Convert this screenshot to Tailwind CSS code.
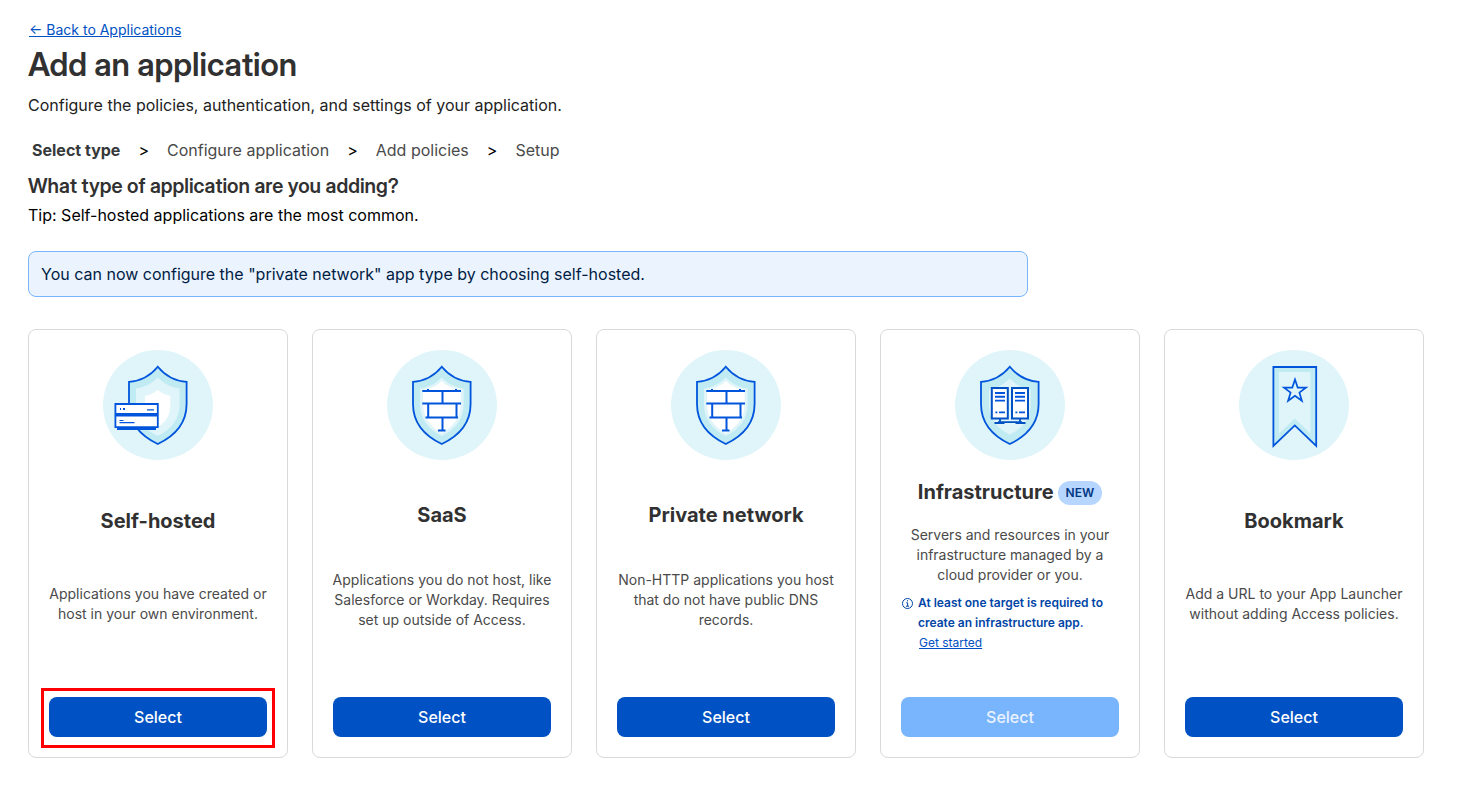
<!DOCTYPE html>
<html lang="en">
<head>
    <meta charset="UTF-8">
    <meta name="viewport" content="width=device-width, initial-scale=1.0">
    <title>Add an application</title>
    <script src="https://cdn.jsdelivr.net/npm/@tailwindcss/browser@4"></script>
</head>
<body class="bg-white font-['Inter',sans-serif] text-base text-[#313131]">

    <main class="pl-7 pr-14 pt-5 pb-11">
        <header>
            <a href="#" class="block w-fit ml-px text-sm leading-5 text-[#0051c3] underline">← Back to Applications</a>
            <h1 class="mt-1 font-['Inter_Display','Inter',sans-serif] text-[32px] leading-[42px] font-semibold">Add an application</h1>
            <p class="mt-[7px] leading-6 text-[#222222]">Configure the policies, authentication, and settings of your application.</p>
        </header>

        <nav aria-label="Steps" class="mt-[21px] ml-1">
            <ol class="flex items-center gap-[18px] leading-6 text-[#4a4a4a]">
                <li class="font-bold text-[#36393a]" aria-current="step">Select type</li>
                <li class="text-black" aria-hidden="true">&gt;</li>
                <li>Configure application</li>
                <li class="text-black" aria-hidden="true">&gt;</li>
                <li>Add policies</li>
                <li class="text-black" aria-hidden="true">&gt;</li>
                <li>Setup</li>
            </ol>
        </nav>

        <h2 class="mt-2 font-['Inter_Display','Inter',sans-serif] text-xl leading-8 font-semibold">What type of application are you adding?</h2>
        <p class="mt-px leading-6 text-black">Tip: Self-hosted applications are the most common.</p>

        <div class="mt-6 max-w-[1000px] rounded-lg border border-[#79b5fc] bg-[#ebf3ff] px-3 py-[10px] leading-6 text-[#001c43]">
            You can now configure the "private network" app type by choosing self-hosted.
        </div>

        <div class="mt-8 grid grid-cols-5 gap-6 text-center">

            <!-- Self-hosted -->
            <section class="flex flex-col justify-between gap-[18px] rounded-lg border border-[#d9d9d9] p-5">
                <svg class="mx-auto size-[110px]" viewBox="0 0 110 110" fill="none" aria-hidden="true">
                    <circle cx="55" cy="55" r="55" fill="#e0f5fa"/>
                    <path d="M54.8 16.7C48 25 38 31 26 31.8V54C26 73 38 86 54.8 94C71.6 86 83.6 73 83.6 54V31.8C71.6 31 61.6 25 54.8 16.7Z" fill="#c0ebf3" stroke="#0055dc" stroke-width="1.8"/>
                    <path d="M54.8 27.6C49 33.5 42 37.5 33 38.5V54C33 69 41 79 54.8 86C68.5 79 76.6 69 76.6 54V38.5C67.5 37.5 60.5 33.5 54.8 27.6Z" fill="#e0f5fa"/>
                    <path d="M54.8 40C51 43 47 45 42 45.7V55C42 65 46 72 54.8 77C63 72 67.3 65 67.3 55V45.7C62.5 45 58.5 43 54.8 40Z" fill="#fff"/>
                    <path d="M12.4 54H54.8V64H12.4ZM12.4 65.7H54.8V77.2H12.4Z" fill="#fff" stroke="#0055dc" stroke-width="1.8"/>
                    <path d="M14 78.7H53" stroke="#0055dc" stroke-width="2.4"/>
                    <path d="M17 59H18M20 59H22" stroke="#0055dc" stroke-width="1.8"/>
                    <path d="M44 59.8H51M16.5 70.5H20.5M16.5 72.6H31.5" stroke="#0055dc" stroke-width="1.2"/>
                </svg>
                <h3 class="text-xl leading-[29px] font-bold">Self-hosted</h3>
                <p class="-mx-1 text-sm leading-5 text-[#4a4a4a]">Applications you have created or host in your own environment.</p>
                <div class="pt-[26px]">
                    <div class="relative">
                        <button type="button" class="block h-10 w-full rounded-lg bg-[#0051c3] font-medium text-white">Select</button>
                        <span class="pointer-events-none absolute -inset-x-2 -top-[9px] -bottom-[11px] border-3 border-[#ff0000]"></span>
                    </div>
                </div>
            </section>

            <!-- SaaS -->
            <section class="flex flex-col justify-between gap-[18px] rounded-lg border border-[#d9d9d9] p-5">
                <svg class="mx-auto size-[110px]" viewBox="0 0 110 110" fill="none" aria-hidden="true">
                    <circle cx="55" cy="55" r="55" fill="#e0f5fa"/>
                    <path d="M54.8 16.7C48 25 38 31 26 31.8V54C26 73 38 86 54.8 94C71.6 86 83.6 73 83.6 54V31.8C71.6 31 61.6 25 54.8 16.7Z" fill="#c0ebf3" stroke="#0055dc" stroke-width="1.8"/>
                    <path d="M54.8 27.6C49 33.5 42 37.5 33 38.5V54C33 69 41 79 54.8 86C68.5 79 76.6 69 76.6 54V38.5C67.5 37.5 60.5 33.5 54.8 27.6Z" fill="#e0f5fa"/>
                    <path d="M54.8 31C49.5 36 43 39 36 40V54C36 67 43 77 54.8 83C66.5 77 73.6 67 73.6 54V40C66.5 39 60 36 54.8 31Z" fill="#fff"/>
                    <path d="M35.3 41H74M35.3 53.5H74M38.5 67.5H71M51 80.5H58.5M41 39V41M69 39V41M55.5 41V53.5M41.2 53.5V67.5M69.5 53.5V67.5M55.5 67.5V80.5" stroke="#0055dc" stroke-width="2"/>
                </svg>
                <h3 class="text-xl leading-[29px] font-bold">SaaS</h3>
                <p class="-mx-1 text-sm leading-5 text-[#4a4a4a]">Applications you do not host, like Salesforce or Workday. Requires set up outside of Access.</p>
                <div class="pt-[26px]">
                    <button type="button" class="block h-10 w-full rounded-lg bg-[#0051c3] font-medium text-white">Select</button>
                </div>
            </section>

            <!-- Private network -->
            <section class="flex flex-col justify-between gap-[18px] rounded-lg border border-[#d9d9d9] p-5">
                <svg class="mx-auto size-[110px]" viewBox="0 0 110 110" fill="none" aria-hidden="true">
                    <circle cx="55" cy="55" r="55" fill="#e0f5fa"/>
                    <path d="M54.8 16.7C48 25 38 31 26 31.8V54C26 73 38 86 54.8 94C71.6 86 83.6 73 83.6 54V31.8C71.6 31 61.6 25 54.8 16.7Z" fill="#c0ebf3" stroke="#0055dc" stroke-width="1.8"/>
                    <path d="M54.8 27.6C49 33.5 42 37.5 33 38.5V54C33 69 41 79 54.8 86C68.5 79 76.6 69 76.6 54V38.5C67.5 37.5 60.5 33.5 54.8 27.6Z" fill="#e0f5fa"/>
                    <path d="M54.8 31C49.5 36 43 39 36 40V54C36 67 43 77 54.8 83C66.5 77 73.6 67 73.6 54V40C66.5 39 60 36 54.8 31Z" fill="#fff"/>
                    <path d="M35.3 41H74M35.3 53.5H74M38.5 67.5H71M51 80.5H58.5M41 39V41M69 39V41M55.5 41V53.5M41.2 53.5V67.5M69.5 53.5V67.5M55.5 67.5V80.5" stroke="#0055dc" stroke-width="2"/>
                </svg>
                <h3 class="text-xl leading-[29px] font-bold">Private network</h3>
                <p class="-mx-1 text-sm leading-5 text-[#4a4a4a]">Non-HTTP applications you host that do not have public DNS records.</p>
                <div class="pt-[26px]">
                    <button type="button" class="block h-10 w-full rounded-lg bg-[#0051c3] font-medium text-white">Select</button>
                </div>
            </section>

            <!-- Infrastructure -->
            <section class="flex flex-col justify-between gap-[18px] rounded-lg border border-[#d9d9d9] p-5">
                <svg class="mx-auto size-[110px]" viewBox="0 0 110 110" fill="none" aria-hidden="true">
                    <circle cx="55" cy="55" r="55" fill="#e0f5fa"/>
                    <path d="M54.8 16.7C48 25 38 31 26 31.8V54C26 73 38 86 54.8 94C71.6 86 83.6 73 83.6 54V31.8C71.6 31 61.6 25 54.8 16.7Z" fill="#c0ebf3" stroke="#0055dc" stroke-width="1.8"/>
                    <path d="M54.8 28.6C49 34.5 42 38.5 34 39.5V54C34 68 41.5 78 54.8 84.5C68 78 75.6 68 75.6 54V39.5C67.5 38.5 60.5 34.5 54.8 28.6Z" fill="#e0f5fa"/>
                    <path d="M36.8 38H52.8V68.6H36.8ZM57 38H73V68.6H57Z" fill="#fff" stroke="#0051c3" stroke-width="2"/>
                    <path d="M40 43H50M40 46.8H50M40 50.6H50M60 43H70M60 46.8H70M60 50.6H70M40.4 62.4H42.4M44 62.4H50M60.4 62.4H62.4M64 62.4H70" stroke="#0055dc" stroke-width="1.9"/>
                    <path d="M45 69V72.5M65 69V72.5M39.5 73H49.5M60.5 73H70.5M43 72.2H67" stroke="#0051c3" stroke-width="1.8"/>
                </svg>
                <div class="flex items-center justify-center gap-1">
                    <h3 class="text-xl leading-[29px] font-bold">Infrastructure</h3>
                    <span class="rounded-full bg-[#b6d5ff] px-2 text-xs leading-6 font-semibold text-[#003682]">NEW</span>
                </div>
                <div>
                    <p class="-mx-1 text-sm leading-5 text-[#4a4a4a]">Servers and resources in your infrastructure managed by a cloud provider or you.</p>
                    <div class="mt-2 flex gap-1 text-left text-xs leading-5 text-[#0045a6]">
                        <svg class="mt-1 size-[13px] shrink-0" viewBox="0 0 13 13" fill="none" stroke="currentColor" aria-hidden="true">
                            <circle cx="6.5" cy="6.5" r="5"/>
                            <path d="M6.5 3.2V4.4M5.2 5.8H6.6V9M5 9.2H8"/>
                        </svg>
                        <div>
                            <p class="font-semibold">At least one target is required to create an infrastructure app.</p>
                            <a href="#" class="ml-px block w-fit text-[#0051c3] underline">Get started</a>
                        </div>
                    </div>
                </div>
                <div class="pt-[26px]">
                    <button type="button" disabled class="block h-10 w-full rounded-lg bg-[#79b5fc] font-medium text-[#ebf3ff]">Select</button>
                </div>
            </section>

            <!-- Bookmark -->
            <section class="flex flex-col justify-between gap-[18px] rounded-lg border border-[#d9d9d9] p-5">
                <svg class="mx-auto size-[110px]" viewBox="0 0 110 110" fill="none" aria-hidden="true">
                    <circle cx="55" cy="55" r="55" fill="#e0f5fa"/>
                    <path d="M34.4 17H77.2V96L55.8 75.4L34.4 96Z" fill="#c0ebf3" stroke="#0055dc" stroke-width="1.8"/>
                    <path d="M40 22H71.4V83.5L55.8 68.4L40 83.5Z" fill="#e0f5fa"/>
                    <path d="M56 29.5L58.7 37.6H67L60.4 42.6L62.9 50.8L56 45.8L49.1 50.8L51.6 42.6L45 37.6H53.3Z" stroke="#0055dc" stroke-width="1.7"/>
                </svg>
                <h3 class="text-xl leading-[29px] font-bold">Bookmark</h3>
                <p class="-mx-1 text-sm leading-5 text-[#4a4a4a]">Add a URL to your App Launcher without adding Access policies.</p>
                <div class="pt-[26px]">
                    <button type="button" class="block h-10 w-full rounded-lg bg-[#0051c3] font-medium text-white">Select</button>
                </div>
            </section>

        </div>
    </main>

</body>
</html>
